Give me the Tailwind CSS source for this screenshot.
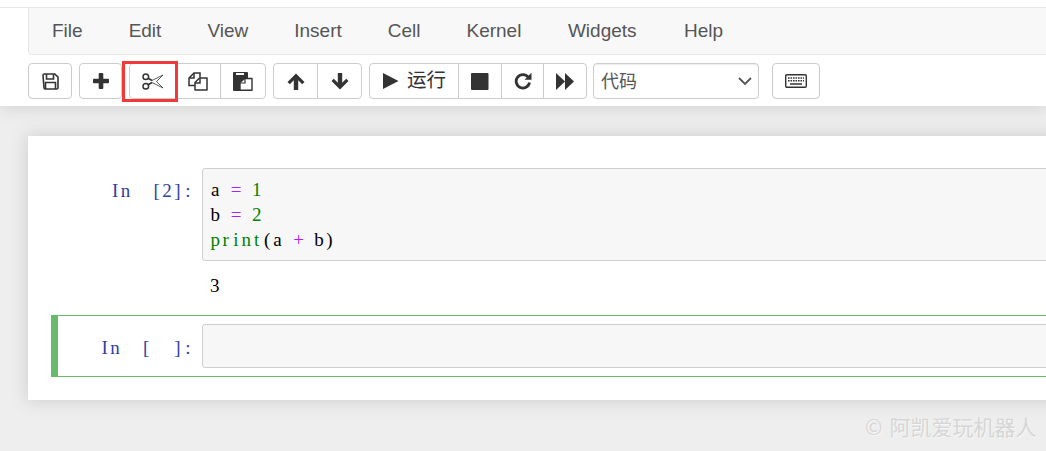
<!DOCTYPE html>
<html lang="en">
  <head>
    <meta charset="UTF-8" />
    <title>Notebook</title>
    <script src="https://cdn.jsdelivr.net/npm/@tailwindcss/browser@4"></script>
  </head>
  <body class="relative h-[451px] w-[1046px] overflow-hidden bg-[#eeeeee] font-['Liberation_Sans','Noto_Sans_CJK_SC',sans-serif]">
    <!-- header -->
    <header class="relative z-10 h-[106px] bg-white pt-[7px] shadow-[0_0_16px_1px_rgba(87,87,87,0.2)]">
      <div class="border-t border-[#e7e7e7]">
        <nav class="ml-[28px] flex h-[47px] w-[1030px] items-center rounded-bl-[4px] border-b border-l border-[#e7e7e7] bg-[#f8f8f8] text-[19px] text-[#555555]">
          <a class="px-[23px]">File</a>
          <a class="px-[23px]">Edit</a>
          <a class="px-[23px]">View</a>
          <a class="px-[23px]">Insert</a>
          <a class="px-[23px]">Cell</a>
          <a class="pl-[23px] pr-[23.500px]">Kernel</a>
          <a class="pl-[23px] pr-[24.500px]">Widgets</a>
          <a class="px-[23px]">Help</a>
        </nav>
      </div>

      <!-- toolbar -->
      <div class="ml-[28px] mt-[8px] flex h-[36px] gap-[7px] text-[#333333]">
        <div class="flex rounded-[4px] border border-[#cccccc]">
          <button class="flex w-[42px] items-center justify-center">
            <svg width="17" height="17" viewBox="0 0 17 17" fill="none" stroke="#333" stroke-width="1.6"><path d="M1 2.2q0-1.2 1.200-1.200h10.600l3.200 3.200v10.600q0 1.200-1.200 1.200h-11.600q-1.200 0-1.200-1.200z" /><path d="M4.500 1v5h7v-5M3.500 16v-6.500h10v6.500" /></svg>
          </button>
        </div>
        <div class="flex rounded-[4px] border border-[#cccccc]">
          <button class="flex w-[41px] items-center justify-center">
            <svg width="16" height="16" viewBox="0 0 16 16" fill="#333"><path d="M5.700 1q0-1 1-1h2.600q1 0 1 1v4.700h4.700q1 0 1 1v2.600q0 1-1 1h-4.700v4.700q0 1-1 1h-2.600q-1 0-1-1v-4.700h-4.700q-1 0-1-1v-2.600q0-1 1-1h4.700z" /></svg>
          </button>
        </div>
        <div class="flex rounded-[4px] border border-[#cccccc]">
          <button class="flex w-[45px] items-center justify-center">
            <svg width="22" height="17" viewBox="0 0 22 17" fill="none" stroke="#333"><circle cx="3.800" cy="3.800" r="2.800" stroke-width="1.500" /><circle cx="3.800" cy="13.200" r="2.800" stroke-width="1.500" /><path d="M6.200 5.200l3.800 2.300M6.200 11.800l3.800-2.300" stroke-width="1.600" /><path d="M10 7.500l11-5.500-6.500 6.500 6.500 6.500-11-5.500" stroke-width=".8" stroke-linejoin="round" /></svg>
          </button>
          <button class="flex w-[45px] items-center justify-center border-l border-[#cccccc]">
            <svg width="20" height="19" viewBox="0 0 20 19" fill="none" stroke="#333" stroke-width="1.500"><path d="M7 13.500h-6v-7.500l5-5h6v4.500" /><path d="M6 1v5h-5" /><path d="M12 6h-.500l-4.500 4.500v7.500h12v-12z" stroke-linejoin="round" /><path d="M12 6v5h-5" /></svg>
          </button>
          <button class="flex w-[45px] items-center justify-center border-l border-[#cccccc]">
            <svg width="20" height="19" viewBox="0 0 20 19"><path d="M0 1q0-1 1-1h13q1 0 1 1v6h-4l-4 3.500v8.500h-6q-1 0-1-1z" fill="#333" /><path d="M3 1h8v2h-8z" fill="#fff" /><path d="M11.500 6.500l-4.500 4v7.800h12v-11.800z" fill="#fff" stroke="#333" stroke-width="1.400" stroke-linejoin="round" /><path d="M12 6.500v4.500h-5" fill="none" stroke="#333" stroke-width="1.200" /></svg>
          </button>
        </div>
        <div class="flex rounded-[4px] border border-[#cccccc]">
          <button class="flex w-[43px] items-center justify-center">
            <svg width="18" height="17" viewBox="0 0 18 17" fill="#333"><path d="M9 .5L17.500 9 15.200 11.300 11.200 7.300V17H6.800V7.300L2.800 11.300 .5 9z" /></svg>
          </button>
          <button class="flex w-[44px] items-center justify-center border-l border-[#cccccc]">
            <svg width="18" height="17" viewBox="0 0 18 17" fill="#333"><path d="M9 16.500L17.500 8 15.200 5.700 11.200 9.700V0H6.800V9.700L2.800 5.700 .5 8z" /></svg>
          </button>
        </div>
        <div class="flex rounded-[4px] border border-[#cccccc]">
          <button class="flex w-[88px] items-center pl-[13px] text-[19.500px]">
            <svg width="16" height="16" viewBox="0 0 16 16" fill="#333"><path d="M0 0l15.500 8-15.500 8z" /></svg>
            <span class="ml-[8px]">运行</span>
          </button>
          <button class="flex w-[43px] items-center justify-center border-l border-[#cccccc]">
            <svg width="18" height="17" viewBox="0 0 18 17" fill="#333"><rect width="17.500" height="17" rx="1" /></svg>
          </button>
          <button class="flex w-[42px] items-center justify-center border-l border-[#cccccc]">
            <svg width="18" height="18" viewBox="0 0 18 18" fill="none"><path d="M14.200 5.200a6.700 6.700 0 1 0 1.300 5.300" stroke="#333" stroke-width="2.800" /><path d="M17.500 .800v7h-7z" fill="#333" /></svg>
          </button>
          <button class="flex w-[43px] items-center justify-center border-l border-[#cccccc]">
            <svg width="18" height="17" viewBox="0 0 18 17" fill="#333"><path d="M0 0l9 8.500-9 8.500zM9 0l9 8.500-9 8.500z" /></svg>
          </button>
        </div>
        <div class="-ml-[1px] flex w-[166px] items-center justify-between rounded-[4px] border border-[#cccccc] pl-[7px] pr-[6px] text-[18px] text-[#555555] shadow-[inset_0_1px_1px_rgba(0,0,0,0.075)]">
          <span class="pt-[3px]">代码</span>
          <svg width="14" height="9" viewBox="0 0 14 9" fill="none" stroke="#555" stroke-width="1.800"><path d="M1 1l6 6 6-6" /></svg>
        </div>
        <div class="ml-[6px] flex rounded-[4px] border border-[#cccccc]">
          <button class="flex w-[46px] items-center justify-center">
            <svg width="22" height="14" viewBox="0 0 22 14" fill="none"><rect x=".7" y=".7" width="20.600" height="12.600" rx="1.200" stroke="#333" stroke-width="1.400" /><path d="M3 4h16M3 6.700h16" stroke="#333" stroke-width="1.400" stroke-dasharray="1.600 .9" /><path d="M5 10h12" stroke="#333" stroke-width="1.500" /></svg>
          </button>
        </div>
      </div>

      <!-- annotation around the cut button -->
      <div class="absolute left-[122px] top-[61px] h-[41px] w-[56px] border-[3px] border-[#f03a3a]"></div>
    </header>

    <!-- notebook: serif glyphs on a fixed 10.4px cell, the reference's code font has no installed match -->
    <main class="ml-[28px] mt-[30px] h-[264px] w-[1060px] bg-white pl-[23px] pt-[32px] font-['Liberation_Serif',serif] text-[19px] leading-[25px] shadow-[0_0_16px_1px_rgba(87,87,87,0.2)]">
      <div class="flex">
        <div class="w-[151px] whitespace-pre pr-[9px] pt-[10px] text-right text-[#303f9f] [&>span]:inline-block [&>span]:w-[10.4px] [&>span]:text-center"><span>I</span><span>n</span><span> </span><span> </span><span>[</span><span>2</span><span>]</span><span>:</span></div>
        <div class="flex-1">
          <div class="h-[93px] rounded-[3px] border border-[#cfcfcf] bg-[#f7f7f7] px-[7px] pt-[8px] text-black">
            <div class="[&>span]:inline-block [&>span]:w-[10.4px] [&>span]:text-center"><span>a</span><span>&nbsp;</span><span class="text-[#aa22ff]">=</span><span>&nbsp;</span><span class="text-[#008000]">1</span></div>
            <div class="[&>span]:inline-block [&>span]:w-[10.4px] [&>span]:text-center"><span>b</span><span>&nbsp;</span><span class="text-[#aa22ff]">=</span><span>&nbsp;</span><span class="text-[#008000]">2</span></div>
            <div class="[&>span]:inline-block [&>span]:w-[10.4px] [&>span]:text-center"><span class="text-[#008000]">p</span><span class="text-[#008000]">r</span><span class="text-[#008000]">i</span><span class="text-[#008000]">n</span><span class="text-[#008000]">t</span><span>(</span><span>a</span><span>&nbsp;</span><span class="text-[#aa22ff]">+</span><span>&nbsp;</span><span>b</span><span>)</span></div>
          </div>
          <div class="h-[54px] pl-[8px] pt-[12px] text-black">3</div>
        </div>
      </div>
      <div class="flex h-[62px] border-y border-r border-l-[7px] border-[#66bb6a] pt-[8px]">
        <div class="w-[144px] whitespace-pre pr-[9px] pt-[11px] text-right text-[#303f9f] [&>span]:inline-block [&>span]:w-[10.4px] [&>span]:text-center"><span>I</span><span>n</span><span> </span><span> </span><span>[</span><span> </span><span> </span><span>]</span><span>:</span></div>
        <div class="h-[44px] flex-1 rounded-[3px] border border-[#cfcfcf] bg-[#f7f7f7]"></div>
      </div>
    </main>

    <!-- watermark -->
    <div class="absolute left-[865px] top-[412px] text-[21px] leading-[28px] text-[#d6d6d6] [font-family:'Noto_Sans_CJK_SC',sans-serif] [text-shadow:1px_1px_0_#f6f6f6]">©<span class="ml-[7px]">阿凯爱玩机器人</span></div>
  </body>
</html>
